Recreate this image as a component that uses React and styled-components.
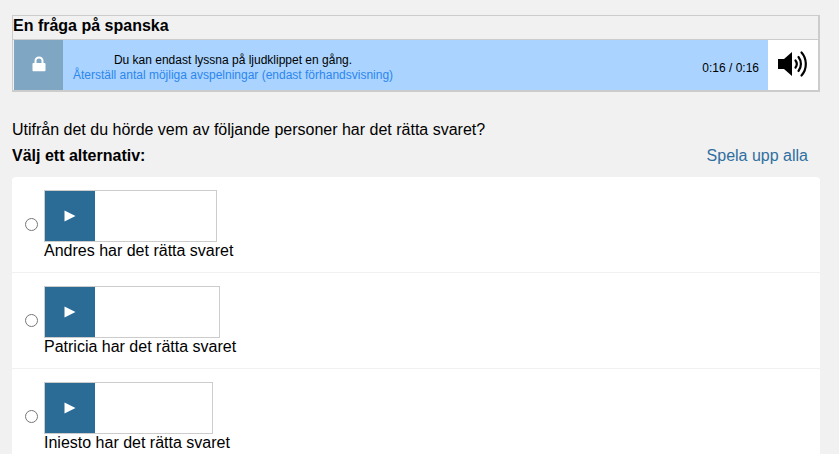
import React from "react";
import styled, { createGlobalStyle } from "styled-components";

const GlobalStyle = createGlobalStyle`
  html, body {
    margin: 0;
    padding: 0;
    height: 454px;
    overflow: hidden;
    background: #f1f1f1;
    color: #000;
    font-family: "Liberation Sans", Arial, sans-serif;
  }
`;

const Page = styled.div`
  width: 808px;
  padding: 15px 0 0 12px;
`;

const AudioBox = styled.section`
  border: 1px solid #cccccc;
  border-bottom-width: 2px;
  border-right-width: 2px;
`;

const BoxTitle = styled.h2`
  margin: 0;
  height: 23px;
  line-height: 20px;
  font-size: 16px;
  font-weight: bold;
  border-bottom: 1px solid #cccccc;
`;

const PlayerBar = styled.div`
  display: flex;
  height: 50px;
  margin-left: 1px;
  background: #aad4ff;
`;

const LockCell = styled.div`
  width: 49px;
  display: flex;
  align-items: center;
  justify-content: center;
  background: #7fa6c2;
  padding-bottom: 2px;
  box-sizing: border-box;
`;

const Notice = styled.div`
  width: 340px;
  padding-top: 13px;
  box-sizing: border-box;
  text-align: center;
  font-size: 12px;
  line-height: 15px;
`;

const ResetLink = styled.a`
  display: block;
  color: #2c86ee;
  white-space: nowrap;
`;

const Time = styled.div`
  flex: 1;
  align-self: flex-end;
  padding: 0 9px 14px 0;
  text-align: right;
  font-size: 12px;
  line-height: 15px;
`;

const SoundCell = styled.div`
  width: 50px;
  display: flex;
  align-items: center;
  justify-content: center;
  background: #fff;
  padding-bottom: 2px;
  box-sizing: border-box;
`;

const Question = styled.p`
  margin: 28px 0 0;
  font-size: 16px;
  line-height: 20px;
`;

const ChoiceHeader = styled.div`
  display: flex;
  justify-content: space-between;
  align-items: center;
  height: 20px;
  margin-top: 6px;
  padding-right: 12px;
  font-size: 16px;
`;

const Strong = styled.strong`
  font-weight: bold;
`;

const PlayAll = styled.a`
  color: #2f6f9f;
`;

const Card = styled.div`
  margin-top: 11px;
  background: #fff;
  border-radius: 4px 4px 0 0;
`;

const OptionRow = styled.label`
  display: flex;
  align-items: center;
  height: 96px;
  box-sizing: border-box;
  padding: 13px 0 0 13px;
  border-bottom: 1px solid #f1f1f1;
  &:last-child {
    border-bottom: 0;
  }
`;

const Radio = styled.input`
  width: 13px;
  height: 13px;
  margin: 0 6px 4px 0;
  flex: none;
  align-self: flex-start;
  margin-top: 28px;
`;

const OptionBody = styled.div`
  display: flex;
  flex-direction: column;
  align-items: flex-start;
  align-self: flex-start;
`;

const ClipPlayer = styled.div`
  width: ${(p) => p.$width}px;
  height: 52px;
  box-sizing: border-box;
  border: 1px solid #cccccc;
  background: #fff;
`;

const PlayButton = styled.div`
  width: 50px;
  height: 50px;
  display: flex;
  align-items: center;
  justify-content: center;
  background: #2b6c97;
`;

const OptionLabel = styled.span`
  font-size: 16px;
  line-height: 18px;
`;

function LockIcon() {
  return (
    <svg width="14" height="16" viewBox="0 0 14 16" fill="#fff">
      <path d="M1.5 7h1V4.8C2.5 2.3 4.4.6 7 .6s4.5 1.7 4.5 4.2V7h1c.6 0 1 .4 1 1v6.2c0 .6-.4 1-1 1h-11c-.6 0-1-.4-1-1V8c0-.6.4-1 1-1zm3-.1h5V4.8C9.5 3.4 8.4 2.5 7 2.5s-2.500.9-2.500 2.300z" />
    </svg>
  );
}

function SpeakerIcon() {
  return (
    <svg width="32" height="28" viewBox="0 0 32 28">
      <path d="M1 9h6l8-7v24l-8-7H1z" fill="#000" />
      <g fill="none" stroke="#000" strokeWidth="2.200" strokeLinecap="round">
        <path d="M18.500 10.500c1.500 2 1.500 5 0 7" />
        <path d="M21.500 7c3.200 4 3.200 10 0 14" />
        <path d="M24.500 2.500c5.500 6 6 16.500 0 23" />
      </g>
    </svg>
  );
}

function PlayIcon() {
  return (
    <svg width="12" height="12" viewBox="0 0 12 12">
      <path d="M0.500 0.500L11.500 6L0.500 11.500z" fill="#fff" />
    </svg>
  );
}

const options = [
  { name: "Andres har det rätta svaret", width: 173 },
  { name: "Patricia har det rätta svaret", width: 176 },
  { name: "Iniesto har det rätta svaret", width: 169 },
];

export default function App() {
  return (
    <>
      <GlobalStyle />
      <Page>
        <AudioBox>
          <BoxTitle>En fråga på spanska</BoxTitle>
          <PlayerBar>
            <LockCell>
              <LockIcon />
            </LockCell>
            <Notice>
              Du kan endast lyssna på ljudklippet en gång.
              <ResetLink>
                Återställ antal möjliga avspelningar (endast förhandsvisning)
              </ResetLink>
            </Notice>
            <Time>0:16 / 0:16</Time>
            <SoundCell>
              <SpeakerIcon />
            </SoundCell>
          </PlayerBar>
        </AudioBox>
        <Question>Utifrån det du hörde vem av följande personer har det rätta svaret?</Question>
        <ChoiceHeader>
          <Strong>Välj ett alternativ:</Strong>
          <PlayAll>Spela upp alla</PlayAll>
        </ChoiceHeader>
        <Card>
          {options.map((o) => (
            <OptionRow key={o.name}>
              <Radio type="radio" name="answer" />
              <OptionBody>
                <ClipPlayer $width={o.width}>
                  <PlayButton>
                    <PlayIcon />
                  </PlayButton>
                </ClipPlayer>
                <OptionLabel>{o.name}</OptionLabel>
              </OptionBody>
            </OptionRow>
          ))}
        </Card>
      </Page>
    </>
  );
}
